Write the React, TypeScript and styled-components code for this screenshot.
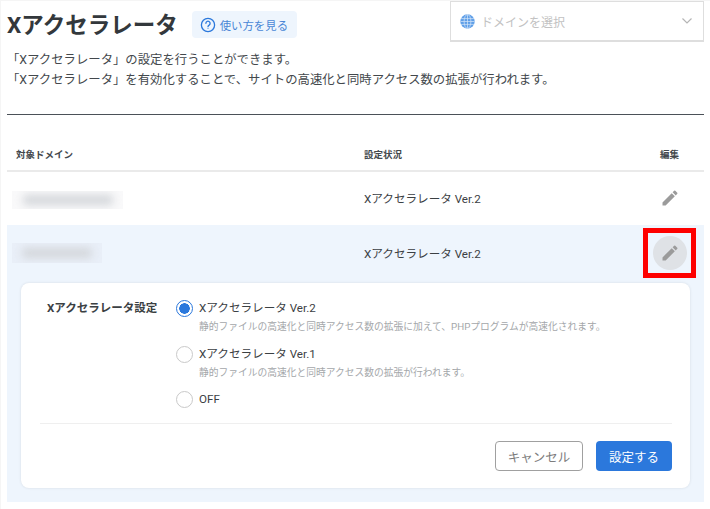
import React, { FC } from 'react';
import styled, { createGlobalStyle } from 'styled-components';

const GlobalStyle = createGlobalStyle`
	html,
	body {
		margin: 0;
		padding: 0;
		background: #fff;
	}
	body {
		font-family: 'Roboto', 'Noto Sans CJK JP', sans-serif;
		color: #3b4043;
	}
`;

const RADIO_OPTIONS = [
	{
		label: 'Xアクセラレータ Ver.2',
		note: '静的ファイルの高速化と同時アクセス数の拡張に加えて、PHPプログラムが高速化されます。',
		checked: true,
	},
	{
		label: 'Xアクセラレータ Ver.1',
		note: '静的ファイルの高速化と同時アクセス数の拡張が行われます。',
		checked: false,
	},
	{ label: 'OFF', checked: false },
];

const PencilIcon: FC = () => (
	<svg width="24" height="24" viewBox="0 0 24 24" fill="#9b9b9b">
		<path d="M3 17.25V21h3.75L17.81 9.94l-3.75-3.75L3 17.25zM20.71 7.04a1 1 0 0 0 0-1.41l-2.34-2.34a1 1 0 0 0-1.41 0l-1.83 1.83 3.75 3.75 1.83-1.83z" />
	</svg>
);

const HelpIcon: FC = () => (
	<svg width="16" height="16" viewBox="0 0 16 16" fill="none" stroke="#2b78dc" strokeWidth="1.3">
		<circle cx="8" cy="8" r="6.6" />
		<path d="M5.9 6.3a2.1 2.1 0 1 1 3.2 1.8c-.7.4-1.1.8-1.1 1.6" strokeLinecap="round" />
		<circle cx="8" cy="11.6" r=".5" fill="#2b78dc" stroke="none" />
	</svg>
);

const GlobeIcon: FC = () => (
	<svg width="15" height="15" viewBox="0 0 15 15">
		<circle cx="7.5" cy="7.5" r="7.2" fill="#5f9fe8" />
		<g fill="none" stroke="#d5e5f8" strokeWidth="0.7">
			<ellipse cx="7.5" cy="7.5" rx="3.4" ry="7" />
			<path d="M7.5.5v14M1 4.6h13M.4 7.5h14.2M1 10.4h13" />
		</g>
	</svg>
);

const ChevronIcon: FC = () => (
	<svg width="12" height="8" viewBox="0 0 12 8" fill="none" stroke="#b5b5b5" strokeWidth="1.2">
		<path d="M1.5 1.5 6 6l4.500-4.500" />
	</svg>
);

const App: FC = () => (
	<Page>
		<GlobalStyle />
		<TitleBar>
			<Title>Xアクセラレータ</Title>
			<HelpLink>
				<HelpIcon />
				使い方を見る
			</HelpLink>
			<DomainSelect>
				<GlobeIcon />
				<SelectText>ドメインを選択</SelectText>
				<ChevronIcon />
			</DomainSelect>
		</TitleBar>
		<Lead>
			<p>「Xアクセラレータ」の設定を行うことができます。</p>
			<p>「Xアクセラレータ」を有効化することで、サイトの高速化と同時アクセス数の拡張が行われます。</p>
		</Lead>
		<TableHead>
			<span>対象ドメイン</span>
			<span>設定状況</span>
			<EditHead>編集</EditHead>
		</TableHead>
		<FirstRow>
			<FirstBlurBox width={111} height={18}>
				<BlurredText width={90} />
			</FirstBlurBox>
			<Status>Xアクセラレータ Ver.2</Status>
			<EditCell>
				<EditButton>
					<PencilIcon />
				</EditButton>
			</EditCell>
		</FirstRow>
		<ActiveSection>
			<Row>
				<BlurBox width={90} height={20}>
					<BlurredText width={70} />
				</BlurBox>
				<Status>Xアクセラレータ Ver.2</Status>
				<EditCell>
					<EditButton active>
						<PencilIcon />
					</EditButton>
					<Highlight />
				</EditCell>
			</Row>
			<Panel>
				<SettingRow>
					<SettingLabel>Xアクセラレータ設定</SettingLabel>
					<RadioList>
						{RADIO_OPTIONS.map((option) => (
							<RadioItem key={option.label}>
								<Radio checked={option.checked} />
								<div>
									<RadioLabel>{option.label}</RadioLabel>
									{option.note && <RadioNote>{option.note}</RadioNote>}
								</div>
							</RadioItem>
						))}
					</RadioList>
				</SettingRow>
				<Actions>
					<CancelButton>キャンセル</CancelButton>
					<SubmitButton>設定する</SubmitButton>
				</Actions>
			</Panel>
		</ActiveSection>
	</Page>
);

const Page = styled.div`
	width: 710px;
	height: 509px;
	box-sizing: border-box;
	padding: 1px 6px 0 7px;
	overflow: hidden;
	box-shadow: inset 1px 1px 0 #f5f5f5;
`;

const TitleBar = styled.div`
	display: flex;
	align-items: flex-start;
	height: 46px;
`;

const Title = styled.h1`
	margin: 7px 0 0;
	font-size: 22.5px;
	line-height: 34px;
	font-weight: 700;
	color: #33383c;
`;

const HelpLink = styled.a`
	display: flex;
	align-items: center;
	gap: 4px;
	margin: 10px 0 0 14px;
	height: 27px;
	padding: 0 9px 0 8px;
	border-radius: 4px;
	background: #eef5fd;
	color: #4a87d6;
	font-size: 11.4px;
`;

const DomainSelect = styled.div`
	display: flex;
	align-items: center;
	box-sizing: border-box;
	width: 254px;
	height: 41px;
	margin-left: auto;
	padding: 0 10px 0 9px;
	border: 1px solid #dedede;
	border-bottom-width: 2px;
`;

const SelectText = styled.span`
	flex: 1;
	margin-left: 6px;
	font-size: 12px;
	color: #c2c2c2;
`;

const Lead = styled.div`
	height: 67px;
	font-size: 12.37px;
	line-height: 20px;
	color: #43484c;
	border-bottom: 1px solid #4b5158;
	p {
		margin: 0;
		position: relative;
		top: 3px;
	}
`;

const TableHead = styled.div`
	display: grid;
	grid-template-columns: 348px 1fr 60px;
	align-items: center;
	height: 57px;
	padding: 23px 0 0 9px;
	box-sizing: border-box;
	border-bottom: 2px solid #eaeaea;
	font-size: 9.5px;
	font-weight: 700;
	color: #43484c;
`;

const EditHead = styled.span`
	padding-left: 16px;
`;

const Row = styled.div`
	display: grid;
	grid-template-columns: 357px 1fr 60px;
	align-items: center;
	height: 56px;
	box-sizing: border-box;
`;

const FirstRow = styled(Row)`
	height: 53px;
	padding-bottom: 2px;
`;

const BlurBox = styled.div<{ width: number; height: number }>`
	display: flex;
	align-items: center;
	justify-content: center;
	width: ${(props) => props.width}px;
	height: ${(props) => props.height}px;
	margin-left: 5px;
	overflow: hidden;
	background: rgba(170, 175, 180, 0.07);
`;

const FirstBlurBox = styled(BlurBox)`
	margin-top: 5px;
`;

const BlurredText = styled.div<{ width: number }>`
	width: ${(props) => props.width}px;
	height: 10px;
	border-radius: 4px;
	background: #d3d6da;
	filter: blur(4px);
`;

const Status = styled.div`
	font-size: 11.6px;
	color: #3b4043;
`;

const EditCell = styled.div`
	position: relative;
	display: flex;
	justify-content: center;
	padding-right: 9px;
`;

const EditButton = styled.div<{ active?: boolean }>`
	display: flex;
	align-items: center;
	justify-content: center;
	width: 34px;
	height: 34px;
	border-radius: 50%;
	background: ${(props) => (props.active ? '#dfe2e6' : 'transparent')};
	svg {
		width: 20px;
		height: 20px;
	}
`;

const Highlight = styled.div`
	position: absolute;
	left: -1px;
	top: -8px;
	width: 53px;
	height: 50px;
	box-sizing: border-box;
	border: 5px solid #fe0000;
`;

const ActiveSection = styled.div`
	background: #eef5fd;
	height: 277px;
	box-sizing: border-box;
`;

const Panel = styled.div`
	margin: 2px 14px 0;
	height: 205px;
	box-sizing: border-box;
	padding: 15px 18px 0 19px;
	background: #fff;
	border-radius: 8px;
	box-shadow: 0 0 3px rgba(0, 0, 0, 0.1);
`;

const SettingRow = styled.div`
	display: flex;
	height: 125px;
	padding-left: 7px;
	border-bottom: 1px solid #efefef;
`;

const SettingLabel = styled.div`
	width: 129px;
	font-size: 11.5px;
	font-weight: 700;
	line-height: 20px;
	color: #3b4043;
`;

const RadioList = styled.div`
	display: flex;
	flex-direction: column;
	gap: 10.5px;
	padding-top: 1px;
`;

const RadioItem = styled.div`
	display: flex;
	gap: 6px;
`;

const Radio = styled.span<{ checked: boolean }>`
	flex: none;
	width: 17px;
	height: 17px;
	margin-top: 1px;
	box-sizing: border-box;
	border-radius: 50%;
	border: 1px solid ${(props) => (props.checked ? '#2b78dc' : '#c9c9c9')};
	background: ${(props) =>
		props.checked ? 'radial-gradient(circle, #2b78dc 0 5px, #fff 5.5px)' : '#fff'};
`;

const RadioLabel = styled.div`
	font-size: 11.6px;
	line-height: 18px;
	color: #3b4043;
`;

const RadioNote = styled.div`
	margin-top: 3px;
	font-size: 9.75px;
	line-height: 14px;
	color: #a4a7aa;
`;

const Actions = styled.div`
	display: flex;
	justify-content: flex-end;
	gap: 13px;
	padding-top: 17px;
`;

const CancelButton = styled.button`
	width: 88px;
	height: 30px;
	padding: 0;
	border: 1px solid #a0a0a0;
	border-radius: 4px;
	background: #fff;
	color: #7c7c7c;
	font: 12.5px 'Roboto', 'Noto Sans CJK JP', sans-serif;
`;

const SubmitButton = styled.button`
	width: 76px;
	height: 30px;
	padding: 0;
	border: 0;
	border-radius: 4px;
	background: #2b78dc;
	color: #fff;
	font: 12.5px 'Roboto', 'Noto Sans CJK JP', sans-serif;
`;

export default App;
